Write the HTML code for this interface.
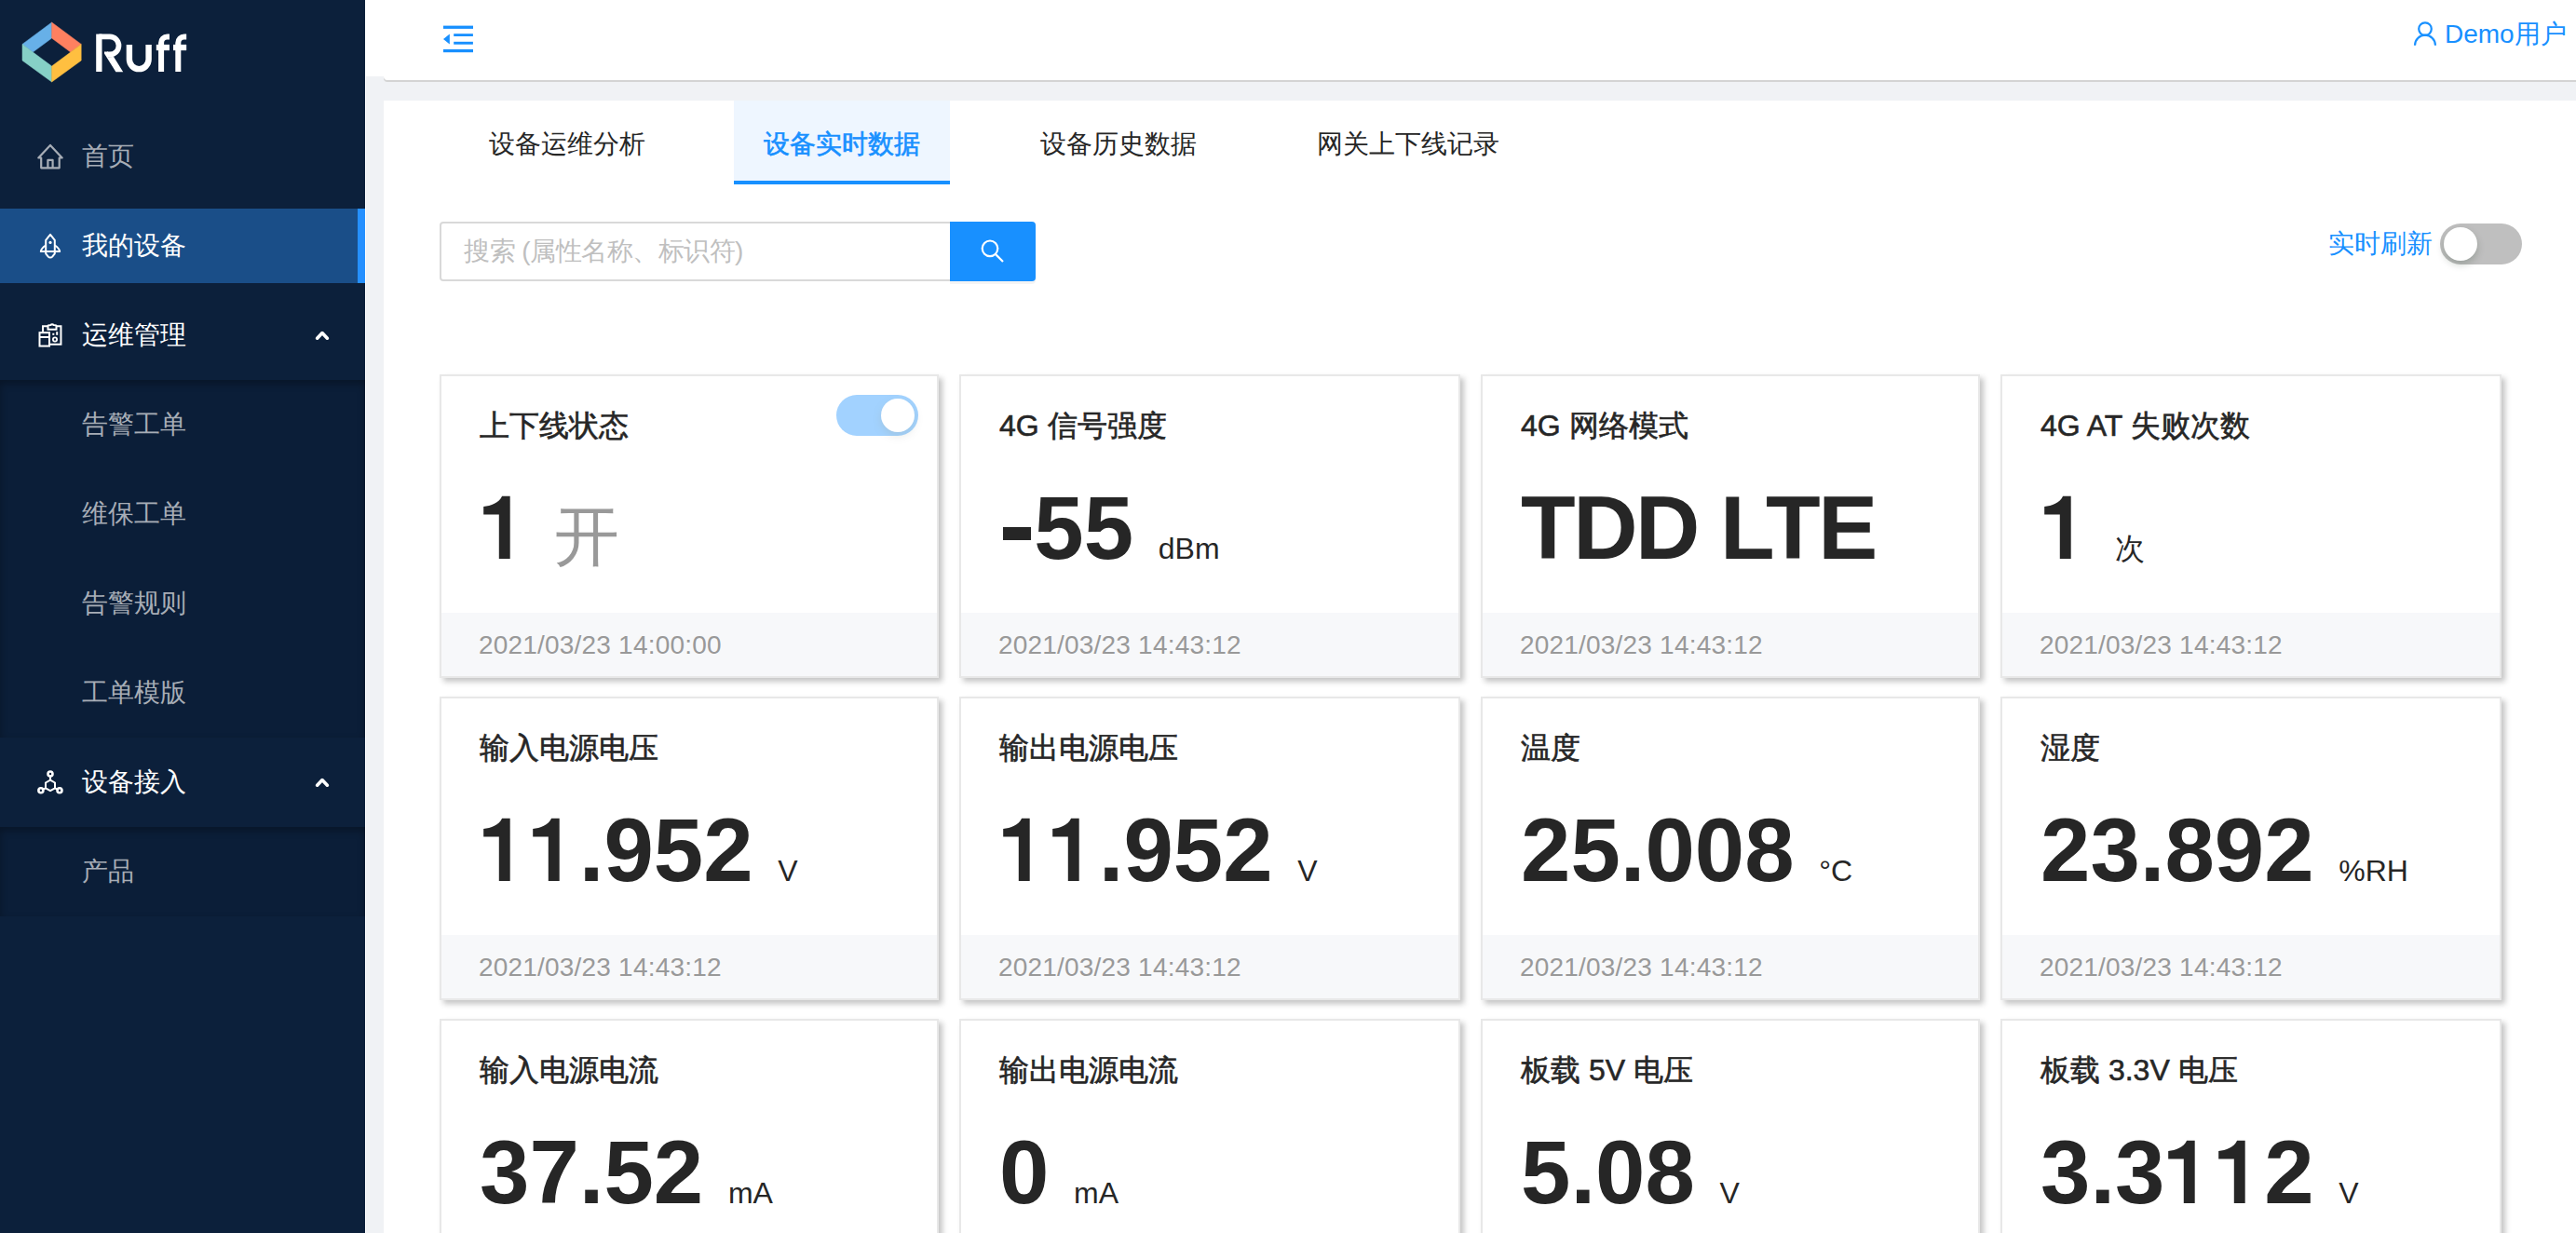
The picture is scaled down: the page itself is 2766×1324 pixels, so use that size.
<!DOCTYPE html>
<html><head><meta charset="utf-8">
<style>
*{margin:0;padding:0;box-sizing:border-box}
html,body{width:2766px;height:1324px;overflow:hidden;background:#fff;font-family:"Liberation Sans",sans-serif}
.abs{position:absolute}
#side{position:absolute;left:0;top:0;width:392px;height:1324px;background:#0c203b}
.mi{position:absolute;left:0;width:392px;height:80px;color:#a7adb6;font-size:28px;line-height:80px}
.mi .t{position:absolute;left:88px;top:0}
.mi svg{position:absolute;left:34px;top:20px}
.mi.act{background:#1a4e88;color:#fff}
.mi.act:after{content:"";position:absolute;right:0;top:0;width:8px;height:80px;background:#2590ff}
.mi.wt{color:#fff}
.sub{position:absolute;left:0;width:392px;background:#0b1e38;box-shadow:inset 0 4px 8px rgba(0,0,0,.3)}
#grey{position:absolute;left:393px;top:82px;width:2373px;height:1242px;background:#f0f2f5}
#hdr{position:absolute;left:392px;top:0;width:2374px;height:82px;background:#fff}
#hdr2{position:absolute;left:412px;top:60px;width:2354px;height:26px;background:#fff;border-bottom-left-radius:4px;box-shadow:0 2px 0 #d4d4d4}
#card{position:absolute;left:412px;top:108px;width:2354px;height:1216px;background:#fff}
.tab{position:absolute;top:108px;height:90px;font-size:28px;color:#262626;line-height:94px}
.tab.on{background:#eef6ff;color:#1890ff;border-bottom:4px solid #1890ff;-webkit-text-stroke:0.6px #1890ff}
.c{position:absolute;height:326px;border:2px solid #e8e8e8;background:#fff;box-shadow:4px 4px 6px rgba(0,0,0,.23)}
.c .ft{position:absolute;left:0;right:0;bottom:0;height:68px;background:#f7f8fa}
.c .ti{position:absolute;left:41px;top:29px;font-size:32px;line-height:48px;color:#262626;font-weight:normal;white-space:nowrap;-webkit-text-stroke:0.6px #262626}
.c .ti b{font-weight:normal}
.c .v{position:absolute;left:41px;top:107px;font-size:96px;line-height:112px;color:#262626;font-weight:bold;white-space:nowrap}
.c .v .hy{display:inline-block;width:29.7px;height:13.8px;background:#262626;margin:0 3.6px 20.2px 4px;vertical-align:baseline}
.c .v svg.one{vertical-align:baseline;fill:#262626}
.c .v .u{font-size:32px;font-weight:normal}
.c .v .g{font-size:70px;font-weight:normal;color:#999}
.c .d{position:absolute;left:40px;top:269px;font-size:28px;line-height:40px;color:#999;white-space:nowrap;letter-spacing:0.2px}
.c .tg{position:absolute;left:424px;top:20px;width:88px;height:44px;border-radius:22px;background:#1890ff;opacity:.4}
.c .tg .kn{position:absolute;right:4px;top:4px;width:36px;height:36px;border-radius:18px;background:#fff;box-shadow:0 4px 8px rgba(0,35,11,.25)}
.c .v .tl{letter-spacing:-2.5px}
</style></head><body>
<div id="side">
  <svg class="abs" style="left:0;top:0" width="392" height="100" viewBox="0 0 392 100">
    <polygon fill="#67b0e8" stroke="#67b0e8" stroke-width="0.5" points="55.6,24 24,47.4 35.3,56 55.6,41"/>
    <polygon fill="#ff8060" stroke="#ff8060" stroke-width="0.5" points="55.6,24 55.6,41 75.8,56 87.2,47.4"/>
    <polygon fill="#86d0c6" stroke="#86d0c6" stroke-width="0.5" points="24,47.4 24,65 55.6,88 55.6,71 35.3,56"/>
    <polygon fill="#ffbf40" stroke="#ffbf40" stroke-width="0.5" points="87.2,47.4 75.8,56 55.6,71 55.6,88 87.2,65"/>
    <g fill="none" stroke="#fff" stroke-width="6.6">
      <path d="M106.35,77 V36.6" stroke-width="6.3"/><path d="M106.35,39.45 H118 A9.5,9.5 0 0 1 118,58.45 H115" stroke-width="5.7"/>
      <path d="M138.9,48.1 V63.8 A10.35,10.35 0 0 0 159.6,63.8 V48.1" stroke-width="6.4"/>
      <path d="M173.1,77 V46 A6.5,6.5 0 0 1 179.6,39.5 H182" stroke-width="6"/>
      <path d="M167.8,51 H182" stroke-width="6.3"/>
      <path d="M191.3,77 V46 A6.5,6.5 0 0 1 197.8,39.5 H200.2" stroke-width="6"/>
      <path d="M186,51 H200.2" stroke-width="6.3"/>
    </g>
    <polygon fill="#fff" points="112,55.6 112,57.6 124.4,77.2 132.2,77.2 122.1,60.9 116,61.3 116,55.6"/>
  </svg>
  <div class="mi" style="top:128px"><svg width="40" height="40" viewBox="0 0 40 40" fill="none" stroke="#a7adb6" stroke-width="2.2" stroke-linejoin="round"><path d="M10.2,32.3 V21.5 H7.3 L20,7.9 L32.7,21.5 H29.7 V32.3 Z"/><path d="M17.4,32.3 V23.9 H22.6 V32.3"/></svg><span class="t">首页</span></div>
  <div class="mi act" style="top:224px"><svg width="40" height="40" viewBox="0 0 40 40" fill="none" stroke="#fff" stroke-width="2" stroke-linejoin="round"><path d="M15.2,26 V13.8 L20,7.9 L24.8,13.8 V26"/><path d="M15,19.5 C11.5,22 10,24 9.8,26 H30.2 C30,24 28.5,22 25,19.5"/><path d="M15.2,26 V28.3 L17.8,31.6 A2.92,2.92 0 0 0 22.2,31.6 L24.8,28.3 V26"/><circle cx="20" cy="16.4" r="1.6" fill="#fff" stroke="none"/></svg><span class="t">我的设备</span></div>
  <div class="mi wt" style="top:320px"><svg width="40" height="40" viewBox="0 0 40 40" fill="none" stroke="#fff" stroke-width="2" ><path d="M12.05,16.5 V10.15 H17.5 M26.5,10.15 H31.45 V29.75 H19"/><path d="M17.5,13.8 V10 C17.5,9.2 19,9.1 20.5,9.1 C21,8 23,8 23.5,9.1 C25,9.1 26.5,9.2 26.5,10 V13.8 Z"/><rect x="8.5" y="17.2" width="10.5" height="14.4"/><path d="M8.5,22 H19"/><rect x="22.3" y="17.8" width="2" height="2" fill="#fff" stroke="none"/><rect x="26.2" y="16.2" width="2" height="3.6" fill="#fff" stroke="none"/><circle cx="25" cy="24.5" r="2.1" stroke-width="1.8"/></svg><span class="t">运维管理</span>
    <svg style="left:326px;top:20px" width="40" height="40" viewBox="0 0 40 40"><path d="M14.6,23.2 L20,17.6 L25.4,23.2" fill="none" stroke="#fff" stroke-width="3.6" stroke-linecap="round" stroke-linejoin="round"/></svg></div>
  <div class="sub" style="top:408px;height:384px">
    <div class="mi" style="top:8px"><span class="t">告警工单</span></div>
    <div class="mi" style="top:104px"><span class="t">维保工单</span></div>
    <div class="mi" style="top:200px"><span class="t">告警规则</span></div>
    <div class="mi" style="top:296px"><span class="t">工单模版</span></div>
  </div>
  <div class="mi wt" style="top:800px"><svg width="40" height="40" viewBox="0 0 40 40" fill="none" stroke="#fff" stroke-width="2"><circle cx="20" cy="11" r="2.5" stroke-width="2.6"/><circle cx="9.9" cy="28.7" r="2.5" stroke-width="2.6"/><circle cx="30" cy="28.7" r="2.5" stroke-width="2.6"/><path d="M20,17.6 L25,20.5 V26.3 L20,29.2 L15,26.3 V20.5 Z"/><path d="M20,13.8 V17.6 M15,26.3 L12.4,27.5 M25,26.3 L27.6,27.5"/></svg><span class="t">设备接入</span>
    <svg style="left:326px;top:20px" width="40" height="40" viewBox="0 0 40 40"><path d="M14.6,23.2 L20,17.6 L25.4,23.2" fill="none" stroke="#fff" stroke-width="3.6" stroke-linecap="round" stroke-linejoin="round"/></svg></div>
  <div class="sub" style="top:888px;height:96px">
    <div class="mi" style="top:8px"><span class="t">产品</span></div>
  </div>
</div>
<div id="grey"></div>
<div id="hdr"></div>
<div id="hdr2"></div>
<svg class="abs" style="left:470px;top:20px" width="44" height="44" viewBox="0 0 44 44" fill="#1890ff">
  <rect x="6" y="7.6" width="32" height="3.3"/><rect x="17.2" y="16.2" width="20.7" height="2.8"/><rect x="17.2" y="24.8" width="20.7" height="2.9"/><rect x="6" y="32.9" width="32" height="3.3"/><polygon points="6,22 12.8,16.4 12.8,27.5"/>
</svg>
<svg class="abs" style="left:2588px;top:20px" width="32" height="32" viewBox="0 0 32 32" fill="none" stroke="#1890ff" stroke-width="2.2"><circle cx="16" cy="11.1" r="6.8"/><path d="M5,28.7 A11,11 0 0 1 27,28.7"/></svg>
<div class="abs" style="left:2625px;top:17px;font-size:28px;line-height:40px;color:#1890ff;white-space:nowrap">Demo用户</div>
<div id="card"></div>
<div class="tab" style="left:493px;width:232px;text-align:center">设备运维分析</div>
<div class="tab on" style="left:788px;width:232px;text-align:center">设备实时数据</div>
<div class="tab" style="left:1085px;width:232px;text-align:center">设备历史数据</div>
<div class="tab" style="left:1382px;width:260px;text-align:center">网关上下线记录</div>
<div class="abs" style="left:472px;top:238px;width:550px;height:64px;border:2px solid #d9d9d9;border-radius:4px 0 0 4px;font-size:28px;line-height:60px;color:#bfbfbf;padding-left:24px;white-space:nowrap;letter-spacing:-0.5px">搜索 (属性名称、标识符)</div>
<div class="abs" style="left:1020px;top:238px;width:92px;height:64px;background:#1890ff;border-radius:0 4px 4px 0;box-shadow:0 3px 0 rgba(0,0,0,.045)">
  <svg class="abs" style="left:26px;top:12px" width="40" height="40" viewBox="0 0 40 40" fill="none" stroke="#fff" stroke-width="2.2"><circle cx="17" cy="16.8" r="8.3"/><path d="M22.4,22.4 L31,31" stroke-linecap="butt"/></svg>
</div>
<div class="abs" style="left:2500px;top:238px;font-size:28px;line-height:48px;color:#1890ff;white-space:nowrap">实时刷新</div>
<div class="abs" style="left:2620px;top:240px;width:88px;height:44px;border-radius:22px;background:#bfbfbf">
  <div class="abs" style="left:4px;top:4px;width:36px;height:36px;border-radius:18px;background:#fff;box-shadow:0 4px 8px rgba(0,35,11,.2)"></div>
</div>
<!-- cards -->
<!--CARDS--><div class="c" style="left:472px;top:402px;width:536px"><div class="ft"></div><div class="ti">上下线状态</div><div class="v"><svg class="one" width="53.4" height="68" viewBox="0 -68 53.4 68"><path d="M4.2,-56.1 C12,-56.6 21,-60 24.1,-67.2 H32.7 V0 H20.8 V-47.6 H4.2 Z"/></svg> <span class="g">开</span></div><div class="d">2021/03/23 14:00:00</div><div class="tg"><div class="kn"></div></div></div>
<div class="c" style="left:1030px;top:402px;width:538px"><div class="ft"></div><div class="ti"><b>4G</b> 信号强度</div><div class="v"><span class="hy"></span>55 <span class="u">dBm</span></div><div class="d">2021/03/23 14:43:12</div></div>
<div class="c" style="left:1590px;top:402px;width:536px"><div class="ft"></div><div class="ti"><b>4G</b> 网络模式</div><div class="v"><span class="tl">TDD LTE</span></div><div class="d">2021/03/23 14:43:12</div></div>
<div class="c" style="left:2148px;top:402px;width:538px"><div class="ft"></div><div class="ti"><b>4G AT</b> 失败次数</div><div class="v"><svg class="one" width="53.4" height="68" viewBox="0 -68 53.4 68"><path d="M4.2,-56.1 C12,-56.6 21,-60 24.1,-67.2 H32.7 V0 H20.8 V-47.6 H4.2 Z"/></svg> <span class="u">次</span></div><div class="d">2021/03/23 14:43:12</div></div>
<div class="c" style="left:472px;top:748px;width:536px"><div class="ft"></div><div class="ti">输入电源电压</div><div class="v"><svg class="one" width="53.4" height="68" viewBox="0 -68 53.4 68"><path d="M4.2,-56.1 C12,-56.6 21,-60 24.1,-67.2 H32.7 V0 H20.8 V-47.6 H4.2 Z"/></svg><svg class="one" width="53.4" height="68" viewBox="0 -68 53.4 68"><path d="M4.2,-56.1 C12,-56.6 21,-60 24.1,-67.2 H32.7 V0 H20.8 V-47.6 H4.2 Z"/></svg>.952 <span class="u">V</span></div><div class="d">2021/03/23 14:43:12</div></div>
<div class="c" style="left:1030px;top:748px;width:538px"><div class="ft"></div><div class="ti">输出电源电压</div><div class="v"><svg class="one" width="53.4" height="68" viewBox="0 -68 53.4 68"><path d="M4.2,-56.1 C12,-56.6 21,-60 24.1,-67.2 H32.7 V0 H20.8 V-47.6 H4.2 Z"/></svg><svg class="one" width="53.4" height="68" viewBox="0 -68 53.4 68"><path d="M4.2,-56.1 C12,-56.6 21,-60 24.1,-67.2 H32.7 V0 H20.8 V-47.6 H4.2 Z"/></svg>.952 <span class="u">V</span></div><div class="d">2021/03/23 14:43:12</div></div>
<div class="c" style="left:1590px;top:748px;width:536px"><div class="ft"></div><div class="ti">温度</div><div class="v">25.008 <span class="u">°C</span></div><div class="d">2021/03/23 14:43:12</div></div>
<div class="c" style="left:2148px;top:748px;width:538px"><div class="ft"></div><div class="ti">湿度</div><div class="v">23.892 <span class="u">%RH</span></div><div class="d">2021/03/23 14:43:12</div></div>
<div class="c" style="left:472px;top:1094px;width:536px"><div class="ft"></div><div class="ti">输入电源电流</div><div class="v">37.52 <span class="u">mA</span></div><div class="d">2021/03/23 14:43:12</div></div>
<div class="c" style="left:1030px;top:1094px;width:538px"><div class="ft"></div><div class="ti">输出电源电流</div><div class="v">0 <span class="u">mA</span></div><div class="d">2021/03/23 14:43:12</div></div>
<div class="c" style="left:1590px;top:1094px;width:536px"><div class="ft"></div><div class="ti">板载 <b>5V</b> 电压</div><div class="v">5.08 <span class="u">V</span></div><div class="d">2021/03/23 14:43:12</div></div>
<div class="c" style="left:2148px;top:1094px;width:538px"><div class="ft"></div><div class="ti">板载 <b>3.3V</b> 电压</div><div class="v">3.3<svg class="one" width="53.4" height="68" viewBox="0 -68 53.4 68"><path d="M4.2,-56.1 C12,-56.6 21,-60 24.1,-67.2 H32.7 V0 H20.8 V-47.6 H4.2 Z"/></svg><svg class="one" width="53.4" height="68" viewBox="0 -68 53.4 68"><path d="M4.2,-56.1 C12,-56.6 21,-60 24.1,-67.2 H32.7 V0 H20.8 V-47.6 H4.2 Z"/></svg>2 <span class="u">V</span></div><div class="d">2021/03/23 14:43:12</div></div><!--/CARDS-->
</body></html>
